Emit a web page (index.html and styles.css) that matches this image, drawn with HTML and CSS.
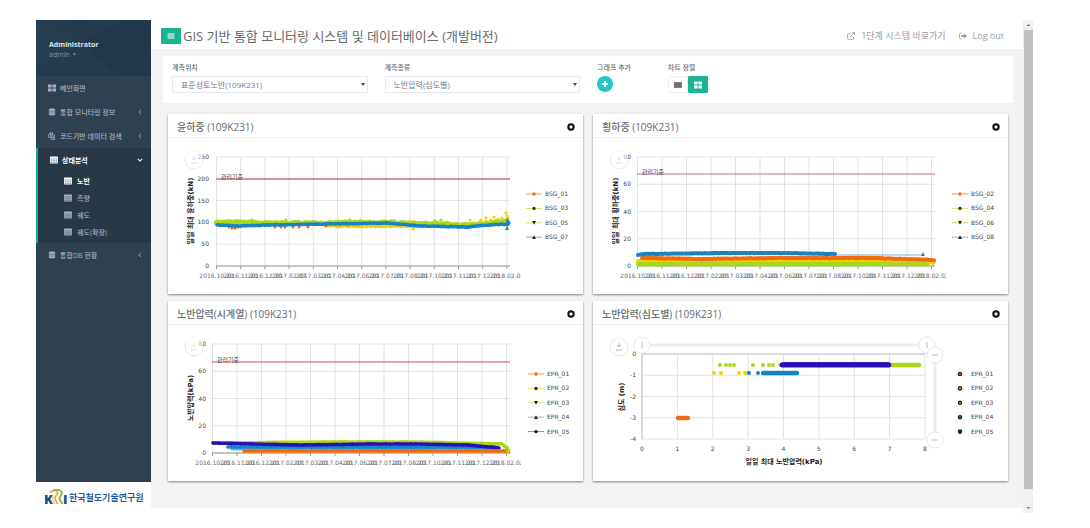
FILE: index.html
```html
<!DOCTYPE html>
<html lang="ko">
<head>
<meta charset="utf-8">
<meta name="viewport" content="width=device-width, initial-scale=1">
<title>GIS 기반 통합 모니터링 시스템</title>
<link rel="stylesheet" href="styles.css">
</head>
<body>
<svg class="sprite" aria-hidden="true">
  <symbol id="i-large" viewBox="0 0 14 14"><path d="M0 1h6.3v5.3H0zM7.7 1H14v5.3H7.7zM0 7.7h6.3V13H0zM7.7 7.7H14V13H7.7z"/></symbol>
  <symbol id="i-db" viewBox="0 0 14 14"><path d="M1.500 2.500C1.500.5 12.500.5 12.500 2.500v9c0 2-11 2-11 0z"/><path d="M1.500 4.800c2 1.200 9 1.200 11 0M1.500 8.200c2 1.200 9 1.200 11 0" fill="none" stroke="#2f4050" stroke-width=".9"/></symbol>
  <symbol id="i-copy" viewBox="0 0 14 14"><path d="M4 1h4v3.500H4.500V10H1V4zM6 5h5.500v8H6zM2 4h2.500V1.500" fill="none" stroke="currentColor" stroke-width="1.300"/><path d="M8 7.500h2v4H8z"/></symbol>
  <symbol id="i-table" viewBox="0 0 14 14"><path d="M1 1h12a1 1 0 0 1 1 1v10a1 1 0 0 1-1 1H1a1 1 0 0 1-1-1V2a1 1 0 0 1 1-1zm0 3.500v1.800h3.500V4.500zm4.500 0v1.800h3V4.500zm4 0v1.800H13V4.500zM1 7.300v1.800h3.500V7.300zm4.500 0v1.800h3V7.300zm4 0v1.800H13V7.300zM1 10.100V12h3.500v-1.900zm4.500 0V12h3v-1.900zm4 0V12H13v-1.900z" fill-rule="evenodd"/><path d="M0 4h14v8H0z" opacity=".5"/></symbol>
  <symbol id="i-bars" viewBox="0 0 14 14"><path d="M1 2.500h12v2H1zM1 6h12v2H1zM1 9.500h12v2H1z"/></symbol>
  <symbol id="i-left" viewBox="0 0 14 14"><path d="M9.500 2 4.500 7l5 5" fill="none" stroke="currentColor" stroke-width="2"/></symbol>
  <symbol id="i-down" viewBox="0 0 14 14"><path d="m2 4.500 5 5 5-5" fill="none" stroke="currentColor" stroke-width="2.400"/></symbol>
  <symbol id="i-caret" viewBox="0 0 14 14"><path d="M2 4h10L7 10z"/></symbol>
  <symbol id="i-external" viewBox="0 0 14 14"><path d="M7.500 2.500h-5a1.500 1.500 0 0 0-1.500 1.500v7.500A1.500 1.500 0 0 0 2.500 13H10a1.500 1.500 0 0 0 1.500-1.500V8.500M5.500 8.500l6-6" fill="none" stroke="currentColor" stroke-width="1.400"/><path d="M8.500.5H14V6z"/></symbol>
  <symbol id="i-logout" viewBox="0 0 14 14"><path d="M5 2H2.800A1.800 1.800 0 0 0 1 3.800v6.400A1.800 1.800 0 0 0 2.800 12H5" fill="none" stroke="currentColor" stroke-width="1.400"/><path d="M4 5.300h4.300V2.500L14 7l-5.700 4.500V8.700H4z"/></symbol>
  <symbol id="i-plus" viewBox="0 0 16 16"><path d="M7 5h2v2h2v2H9v2H7V9H5V7h2z"/></symbol>
  <symbol id="i-stop" viewBox="0 0 14 14"><path d="M0 2h14v10H0z"/><path d="M0 4.700h14M0 7h14M0 9.300h14" stroke="#fff" stroke-opacity=".3" stroke-width=".6"/></symbol>
  <symbol id="i-close" viewBox="0 0 14 14"><circle cx="7" cy="7" r="6.500"/><path d="m4.800 4.800 4.400 4.400m0-4.400L4.800 9.200" stroke="#fff" stroke-width="2.400"/></symbol>
</svg>

<div class="app">
  <aside class="sidebar">
    <div class="profile">
      <strong>Administrator</strong>
      <button class="profile-menu" type="button">admin <svg class="caret"><use href="#i-caret"/></svg></button>
    </div>
    <nav class="menu" aria-label="메뉴">
      <a class="item" href="#"><svg class="icon"><use href="#i-large"/></svg><span>메인화면</span></a>
      <a class="item" href="#"><svg class="icon"><use href="#i-db"/></svg><span>통합 모니터링 정보</span><svg class="arrow"><use href="#i-left"/></svg></a>
      <a class="item" href="#"><svg class="icon"><use href="#i-copy"/></svg><span>코드기반 데이터 검색</span><svg class="arrow"><use href="#i-left"/></svg></a>
      <div class="group">
        <a class="item on" href="#"><svg class="icon"><use href="#i-table"/></svg><span>상태분석</span><svg class="arrow"><use href="#i-down"/></svg></a>
        <a class="sub on" href="#"><svg class="icon"><use href="#i-table"/></svg><span>노반</span></a>
        <a class="sub" href="#"><svg class="icon"><use href="#i-table"/></svg><span>측량</span></a>
        <a class="sub" href="#"><svg class="icon"><use href="#i-table"/></svg><span>궤도</span></a>
        <a class="sub" href="#"><svg class="icon"><use href="#i-table"/></svg><span>궤도(확장)</span></a>
      </div>
      <a class="item" href="#"><svg class="icon"><use href="#i-db"/></svg><span>통합DB 현황</span><svg class="arrow"><use href="#i-left"/></svg></a>
    </nav>
    <div class="brand">
      <svg class="brand-mark" viewBox="0 0 24 18" role="img" aria-label="KRRI">
        <text x="0" y="15">K</text>
        <path d="M6 3.500C9 .5 14 .5 13.500 4.500c-.3 2.500-3.500 2.500-2.500 5 .5 1.500 1.500 3 2.500 5.500" fill="none" stroke="#f2a23a" stroke-width="1.800"/>
        <path d="M9 6.500C8 8 7.500 9 9 11l2 4" fill="none" stroke="#f7c36a" stroke-width="1.200"/>
        <path d="M9.500 1.500C14-.5 19 1.500 17.500 5.500c-.8 2-3 2.500-2 4.500s2 3.500 3 5" fill="none" stroke="#7dbb3c" stroke-width="1.800"/>
        <text x="19" y="15">I</text>
      </svg>
      <span>한국철도기술연구원</span>
    </div>
  </aside>

  <main class="main">
    <header class="topbar">
      <button class="toggle" type="button" aria-label="메뉴 접기"><svg class="icon"><use href="#i-bars"/></svg></button>
      <h1>GIS 기반 통합 모니터링 시스템 및 데이터베이스 (개발버전)</h1>
      <a class="toplink" href="#"><svg class="icon"><use href="#i-external"/></svg>1단계 시스템 바로가기</a>
      <a class="toplink" href="#"><svg class="icon"><use href="#i-logout"/></svg>Log out</a>
    </header>

    <form class="filters">
      <div class="field">
        <label for="place">계측위치</label>
        <div class="select"><select id="place"><option>표준성토노반(109K231)</option></select></div>
      </div>
      <div class="field">
        <label for="kind">계측종류</label>
        <div class="select"><select id="kind"><option>노반압력(심도별)</option></select></div>
      </div>
      <div class="field">
        <label for="add">그래프 추가</label>
        <button id="add" class="add" type="button"><svg><use href="#i-plus"/></svg></button>
      </div>
      <div class="field">
        <span class="caption" id="align">차트 정렬</span>
        <div class="toggles" role="group" aria-labelledby="align">
          <button type="button" aria-label="한 줄"><svg class="icon"><use href="#i-stop"/></svg></button>
          <button type="button" class="on" aria-label="격자"><svg class="icon"><use href="#i-large"/></svg></button>
        </div>
      </div>
    </form>

    <div class="cards">
      <section class="card">
        <div class="card-head"><h2>윤하중 (109K231)</h2><button type="button" aria-label="닫기"><svg><use href="#i-close"/></svg></button></div>
        <svg class="chart" id="wheel" viewBox="0 0 415 156"></svg>
      </section>
      <section class="card">
        <div class="card-head"><h2>횡하중 (109K231)</h2><button type="button" aria-label="닫기"><svg><use href="#i-close"/></svg></button></div>
        <svg class="chart" id="lateral" viewBox="0 0 415 156"></svg>
      </section>
      <section class="card">
        <div class="card-head"><h2>노반압력(시계열) (109K231)</h2><button type="button" aria-label="닫기"><svg><use href="#i-close"/></svg></button></div>
        <svg class="chart" id="pressure" viewBox="0 0 415 156"></svg>
      </section>
      <section class="card">
        <div class="card-head"><h2>노반압력(심도별) (109K231)</h2><button type="button" aria-label="닫기"><svg><use href="#i-close"/></svg></button></div>
        <svg class="chart" id="depth" viewBox="0 0 415 156"></svg>
      </section>
    </div>
  </main>

  <div class="scrollbar" aria-hidden="true">
    <svg class="scroll-end" viewBox="0 0 9 9"><path d="M2.500 5.500h4l-2-2z"/></svg>
    <div class="thumb"></div>
    <svg class="scroll-end" viewBox="0 0 9 9"><path d="M2.500 3.500h4l-2 2z"/></svg>
  </div>
</div>
<script src="charts.js"></script>
</body>
</html>
```
FILE: styles.css
```css
* { box-sizing: border-box; }

body {
  margin: 0;
  min-height: 100vh;
  padding: 20px 57px 15px 36px;
  display: flex;
  background: #fff;
  color: #676a6c;
  font-family: "Open Sans", "Noto Sans CJK KR", sans-serif;
  font-size: 7px;
}

h1, h2 { margin: 0; font-weight: 400; }
a { color: inherit; text-decoration: none; }
button { padding: 0; border: 0; background: none; color: inherit; font: inherit; }
svg { fill: currentColor; }
.sprite { position: absolute; width: 0; height: 0; }
.icon { width: 8px; height: 8px; flex: none; }

.app { flex: 1; display: flex; min-width: 0; }

/* Sidebar */
.sidebar {
  flex: none;
  width: 115px;
  display: flex;
  flex-direction: column;
  background: #2f4050;
  color: #a7b1c2;
}
.profile {
  display: flex;
  flex-direction: column;
  align-items: flex-start;
  height: 56px;
  padding: 20px 13px 0;
  line-height: 10px;
  background:
    linear-gradient(220deg, transparent 55%, rgba(38, 62, 80, .6) 55%),
    linear-gradient(150deg, #263c4d 40%, #22384a 40%);
}
.profile strong { color: #dfe4ed; font-weight: 700; }
.profile-menu { line-height: 10px; color: #8095a8; }
.caret { width: 5px; height: 5px; }
.menu { flex: 1; }
.item {
  display: flex;
  align-items: center;
  gap: 4px;
  height: 24px;
  padding: 0 8px 0 12px;
  font-weight: 500;
}
.arrow { width: 6px; height: 6px; margin-left: auto; }
.group {
  border-left: 2px solid #19aa8d;
  background: #293846;
  padding-bottom: 3px;
}
.sub {
  display: flex;
  align-items: center;
  gap: 5px;
  height: 17px;
  padding-left: 26px;
  font-weight: 500;
}
.item.on, .sub.on { color: #fff; font-weight: 600; }
.brand {
  display: flex;
  align-items: center;
  gap: 1px;
  height: 31px;
  padding-left: 8px;
  background: #fff;
  color: #1c5c9c;
  font-size: 9px;
  font-weight: 700;
  white-space: nowrap;
}
.brand-mark { width: 24px; height: 18px; flex: none; }
.brand-mark text { font: 800 13px "Open Sans", sans-serif; fill: #14508f; }

/* Main column */
.main {
  flex: 1;
  min-width: 0;
  margin-bottom: 5px;
  background: #f3f3f4;
}
.topbar {
  display: flex;
  align-items: center;
  min-height: 29px;
  padding: 3px 19px 0 10px;
  background: #fff;
}
.toggle {
  display: grid;
  place-items: center;
  width: 20px;
  height: 16px;
  border-radius: 1px;
  background: #1ab394;
  color: #fff;
}
h1 { flex: 1; margin-left: 2px; font-size: 13px; line-height: 18px; }
.toplink {
  display: flex;
  align-items: center;
  gap: 6px;
  margin-left: 13px;
  color: #999c9e;
  font-size: 9px;
  line-height: 12px;
}

.filters {
  display: grid;
  grid-template-columns: minmax(0, 3fr) minmax(0, 3fr) minmax(0, 1fr) minmax(0, 5fr);
  margin: 7px 10px 0 12px;
  padding: 7px 0 10px;
  background: #fff;
}
.field {
  display: flex;
  flex-direction: column;
  align-items: flex-start;
  gap: 3px;
  padding: 0 8px 0 9px;
  white-space: nowrap;
}
.field label, .caption { font-weight: 500; line-height: 10px; }
.select { position: relative; width: 100%; }
.select::after {
  content: "";
  position: absolute;
  top: 7px;
  right: 3px;
  border: 2px solid transparent;
  border-top: 3px solid #444;
  border-bottom: 0;
}
select {
  appearance: none;
  display: block;
  width: 100%;
  height: 17px;
  padding: 0 8px;
  border: 1px solid #e8e9eb;
  border-radius: 1px;
  background: #fff;
  color: #76797b;
  font: inherit;
  font-size: 8px;
}
.add {
  width: 16px;
  height: 16px;
  border-radius: 50%;
  background: #23c6c8;
  color: #fff;
}
.add svg { display: block; width: 16px; height: 16px; }
.toggles { display: flex; }
.toggles button {
  display: grid;
  place-items: center;
  width: 20px;
  height: 17px;
  border: 1px solid #eef0f1;
  border-radius: 1px;
}
.toggles .on { border-color: #1ab394; background: #1ab394; color: #fff; }

.cards {
  display: grid;
  grid-template-columns: repeat(2, minmax(0, 1fr));
  gap: 7px 10px;
  margin: 11px 15px 27px 17px;
}
.card { background: #fff; box-shadow: 0 1px 2px rgba(0, 0, 0, .45); }
.card-head {
  display: flex;
  align-items: center;
  justify-content: space-between;
  height: 24px;
  padding: 2px 8px 0 9px;
  border-bottom: 1px solid #f0f0f1;
}
.card-head h2 { font-size: 10px; font-weight: 500; line-height: 14px; }
.card-head button { width: 8px; height: 8px; color: #111; }
.card-head svg { display: block; width: 8px; height: 8px; }

/* Charts */
.chart {
  display: block;
  width: 100%;
  font-family: "DejaVu Sans", "Noto Sans CJK KR", sans-serif;
  font-size: 6px;
  fill: #444;
}
.chart .title { font-size: 7px; font-weight: 700; fill: #222; text-anchor: middle; }
.chart .end { text-anchor: end; }
.chart .mid { text-anchor: middle; }
.chart .grid { stroke: #e2e2e2; fill: none; }
.chart .axis { stroke: #999; fill: none; }
.chart .knob { fill: #fff; stroke: #e8e8e8; }
.chart .glyph { fill: none; stroke: #b5b5b5; }
.chart .track { stroke: #ebebeb; stroke-width: 3; }

/* Scrollbar */
.scrollbar {
  flex: none;
  width: 10px;
  display: flex;
  flex-direction: column;
  align-items: center;
  background: #f1f1f1;
  color: #777;
}
.scroll-end { width: 9px; height: 10px; flex: none; }
.thumb { flex: 1; width: 9px; margin-bottom: 14px; background: #c1c1c1; }
```
FILE: charts.js
```js
const NS = 'http://www.w3.org/2000/svg';
const ORANGE = '#f26a10', YELLOW = '#f7d000', LIME = '#a9d912', BLUE = '#1583c7', VIOLET = '#2b0fb8';
const DATES = ['2016.10.20', '2016.11.20', '2016.12.20', '2017.02.07', '2017.03.20', '2017.04.20', '2017.06.20',
  '2017.07.20', '2017.08.20', '2017.10.20', '2017.11.20', '2017.12.20', '2018.02.02'];

function add(parent, tag, attrs, text) {
  const node = document.createElementNS(NS, tag);
  for (const key in attrs) node.setAttribute(key, attrs[key]);
  if (text !== undefined) node.textContent = text;
  parent.appendChild(node);
  return node;
}

// Repeatable noise in [-1, 1]
let seed = 7;
function noise() {
  seed = (seed * 16807) % 2147483647;
  return seed / 1073741823.5 - 1;
}

// One marker per pixel along a polyline, shaken by `jitter`
function band(svg, color, knots, r, jitter) {
  let d = '';
  for (let k = 1; k < knots.length; k++) {
    const [x0, y0] = knots[k - 1], [x1, y1] = knots[k];
    for (let x = x0; x <= x1; x++) {
      const y = y0 + (y1 - y0) * (x - x0) / (x1 - x0) + noise() * jitter;
      d += `M${x} ${y.toFixed(1)}h.01`;
    }
  }
  add(svg, 'path', { d, stroke: color, 'stroke-width': 2 * r, 'stroke-linecap': 'round' });
}

function dots(svg, color, points, r) {
  points.forEach(([cx, cy]) => add(svg, 'circle', { cx, cy, r, fill: color }));
}

function exportButton(svg, cx, cy) {
  add(svg, 'circle', { class: 'knob', cx, cy, r: 9 });
  add(svg, 'path', { class: 'glyph', d: `M${cx} ${cy - 4}v4m-2-2 2 2 2-2M${cx - 3} ${cy + 3}h6` });
}

function sideTitle(svg, x, y, text) {
  add(svg, 'text', { class: 'title', transform: `translate(${x} ${y}) rotate(-90)` }, text);
}

function timeFrame(svg, o) {
  const top = 19, bottom = 128, step = (bottom - top) / (o.values.length - 1);
  exportButton(svg, 26, 22);
  o.values.forEach((v, i) => {
    const y = bottom - i * step;
    add(svg, 'path', { class: 'grid', d: `M${o.left} ${y}H342` });
    add(svg, 'text', { class: 'end', x: o.labelX, y: y + 2 }, v);
  });
  // White disc edge fades the first digit of the top label
  add(svg, 'circle', { cx: 27, cy: 18, r: 8, fill: '#fff', 'fill-opacity': .6 });
  const labels = add(svg, 'svg', { width: 353, height: 156 });
  DATES.forEach((date, i) => {
    const x = o.left + 0.5 + i * o.step;
    add(svg, 'path', { class: 'grid', d: `M${x} ${top}V${bottom}` });
    add(svg, 'path', { class: 'axis', d: `M${x} ${bottom}v3` });
    add(labels, 'text', { class: 'mid', x, y: 140 }, date);
  });
  add(svg, 'path', { class: 'axis', d: `M${o.left} ${bottom}H342` });
  add(svg, 'path', { d: `M${o.left} ${o.limit}H342`, stroke: o.limitColor });
  add(svg, 'text', { x: o.left + 5, y: o.limit }, '관리기준');
  sideTitle(svg, 25, 73, o.title);
}

const MARKS = {
  dot: 'M-1.700 0a1.700 1.700 0 1 0 3.400 0a1.700 1.700 0 1 0-3.400 0z',
  down: 'M-2-1.700h4l-2 3.600z',
  up: 'M-2 1.700h4l-2-3.600z',
};

function legend(svg, x, y, rows) {
  rows.forEach(([name, line, mark, fill], i) => {
    const cy = y + i * 14.4;
    if (line) add(svg, 'path', { d: `M${x - 8} ${cy}h16`, stroke: line, 'stroke-opacity': .7 });
    add(svg, 'path', { d: MARKS[mark], transform: `translate(${x} ${cy})`, fill });
    if (!line) add(svg, 'circle', { cx: x, cy, r: 1.6, fill, stroke: '#222', 'stroke-width': 1.4 });
    add(svg, 'text', { x: x + 11, y: cy + 2 }, name);
  });
}

// Wheel load
{
  const svg = document.getElementById('wheel');
  timeFrame(svg, { left: 48, labelX: 41, step: 24.2, values: [0, 50, 100, 150, 200, 250], limit: 41, limitColor: '#c8304c', title: '일일 최대 윤하중(kN)' });
  band(svg, YELLOW, [[49, 84], [150, 86], [170, 88], [212, 88], [244, 88], [300, 87], [336, 86]], 1.6, .8);
  dots(svg, YELLOW, [[245, 91], [318, 80], [323, 82], [326, 79], [330, 81], [334, 80], [338, 75], [339, 78], [340, 80], [334, 83], [302, 82], [313, 82]], 1.6);
  band(svg, LIME, [[48, 84], [62, 84], [100, 85], [150, 85], [217, 84], [270, 86], [300, 87], [339, 83]], 2.2, .9);
  dots(svg, LIME, [[84, 82], [118, 82], [182, 82], [267, 83], [273, 82], [279, 84]], 1.6);
  dots(svg, ORANGE, [[61, 89], [64, 90], [67, 90], [70, 89], [107, 89], [113, 89], [117, 89], [125, 89], [131, 89], [140, 89], [158, 88]], 1.5);
  band(svg, BLUE, [[49, 87], [72, 88], [100, 87], [217, 85], [241, 87], [252, 88], [300, 89], [320, 87], [340, 86]], 1.800, .3);
  add(svg, 'path', { d: 'M339 80v10', stroke: BLUE });
  add(svg, 'path', { d: 'M337 92h4l-2-4z', fill: BLUE });
  dots(svg, BLUE, [[340, 83], [341, 85]], 1.6);
  legend(svg, 366, 56, [['BSG_01', ORANGE, 'dot', ORANGE], ['BSG_03', '#c9c81e', 'dot', '#2c3a10'], ['BSG_05', '#c9d01e', 'down', '#222'], ['BSG_07', '#6b7f86', 'up', '#12242e']]);
}

// Lateral load
{
  const svg = document.getElementById('lateral');
  timeFrame(svg, { left: 44, labelX: 38, step: 24.5, values: [0, 20, 40, 60, 80], limit: 36, limitColor: '#c76b8c', title: '일일 최대 횡하중(kN)' });
  band(svg, YELLOW, [[45, 123], [341, 124]], 2, .5);
  band(svg, LIME, [[45, 126], [334, 126]], 2.2, .2);
  dots(svg, YELLOW, [[337, 125], [340, 126]], 1.2);
  band(svg, ORANGE, [[49, 120], [110, 121], [180, 120], [280, 120], [341, 122]], 2, .3);
  band(svg, BLUE, [[45, 117], [52, 116], [130, 115], [190, 115], [242, 116]], 2, .2);
  add(svg, 'path', { d: 'M242 117H330', stroke: BLUE, 'stroke-opacity': .6 });
  add(svg, 'path', { d: 'M328 118h4l-2-4z', fill: BLUE });
  legend(svg, 367, 56, [['BSG_02', ORANGE, 'dot', ORANGE], ['BSG_04', '#b9d41e', 'dot', '#2c3a10'], ['BSG_06', '#c9d01e', 'down', '#222'], ['BSG_08', '#5f8fa0', 'up', '#12242e']]);
}

// Subgrade pressure over time
{
  const svg = document.getElementById('pressure');
  timeFrame(svg, { left: 44, labelX: 38, step: 24.5, values: [0, 20, 40, 60, 80], limit: 37, limitColor: '#cc4a64', title: '노반압력(kPa)' });
  band(svg, LIME, [[46, 118], [160, 117], [250, 117], [334, 119], [339, 123], [341, 127]], 1.800, .1);
  band(svg, '#52c3d8', [[64, 124], [328, 124]], 1.500, 0);
  band(svg, BLUE, [[60, 122], [130, 122], [327, 122]], 1.800, .1);
  band(svg, VIOLET, [[45, 118], [130, 120], [200, 119], [250, 119], [300, 120], [331, 123]], 1.800, .1);
  band(svg, ORANGE, [[76, 126], [340, 126]], 1.800, .1);
  dots(svg, LIME, [[336, 121], [339, 123], [340, 126]], 1.800);
  legend(svg, 368, 49, [['EPR_01', ORANGE, 'dot', ORANGE], ['EPR_02', '#e8cb1a', 'dot', '#222'], ['EPR_03', '#c2d422', 'down', '#222'], ['EPR_04', '#7488a8', 'up', '#12242e'], ['EPR_05', '#4b4f95', 'dot', '#111133']]);
}

// Subgrade pressure by depth
{
  const svg = document.getElementById('depth');
  const left = 49, right = 332, top = 29, bottom = 114;
  for (let i = 0; i <= 8; i++) {
    const x = left + i * (right - left) / 8;
    add(svg, 'path', { class: 'grid', d: `M${x} ${top}V${bottom}` });
    add(svg, 'text', { class: 'mid', x, y: 126 }, i);
  }
  for (let i = 0; i <= 4; i++) {
    const y = top + i * (bottom - top) / 4;
    add(svg, 'path', { class: 'grid', d: `M${left} ${y}H${right}` });
    add(svg, 'text', { class: 'end', x: 43, y: y + 2 }, i ? -i : 0);
  }
  add(svg, 'path', { class: 'axis', 'stroke-opacity': .5, d: `M${left} ${bottom}V${top}H${right}` });
  add(svg, 'text', { class: 'title', x: 191, y: 139 }, '일일 최대 노반압력(kPa)');
  sideTitle(svg, 31, 72, '심도 (m)');

  dots(svg, LIME, [127, 133, 137, 141, 160, 170, 176, 180, 187].map(x => [x, 40]), 2);
  band(svg, LIME, [[295, 40], [326, 40]], 2.2, 0);
  band(svg, VIOLET, [[189, 40], [296, 40]], 2.4, 0);
  dots(svg, YELLOW, [121, 128, 146, 152, 155].map(x => [x, 48]), 2);
  dots(svg, BLUE, [156, 165].map(x => [x, 48]), 2);
  band(svg, BLUE, [[170, 48], [204, 48]], 2.2, 0);
  band(svg, ORANGE, [[85, 93], [95, 93]], 2.2, 0);

  add(svg, 'path', { class: 'track', d: 'M49 20H334M342 30V115' });
  [[49, 20], [334, 20], [342, 30], [342, 115]].forEach(([cx, cy], i) => {
    add(svg, 'circle', { class: 'knob', cx, cy, r: 8 });
    const glyph = i < 2 ? `M${cx} ${cy - 3}v6` : `M${cx - 3} ${cy}h6`;
    add(svg, 'path', { class: 'glyph', 'stroke-width': 2, 'stroke-opacity': .5, d: glyph });
  });
  exportButton(svg, 26, 22);
  legend(svg, 367, 49, [['EPR_01', '', 'dot', ORANGE], ['EPR_02', '', 'dot', YELLOW], ['EPR_03', '', 'dot', LIME], ['EPR_04', '', 'dot', BLUE], ['EPR_05', '', 'dot', VIOLET]]);
}
```
